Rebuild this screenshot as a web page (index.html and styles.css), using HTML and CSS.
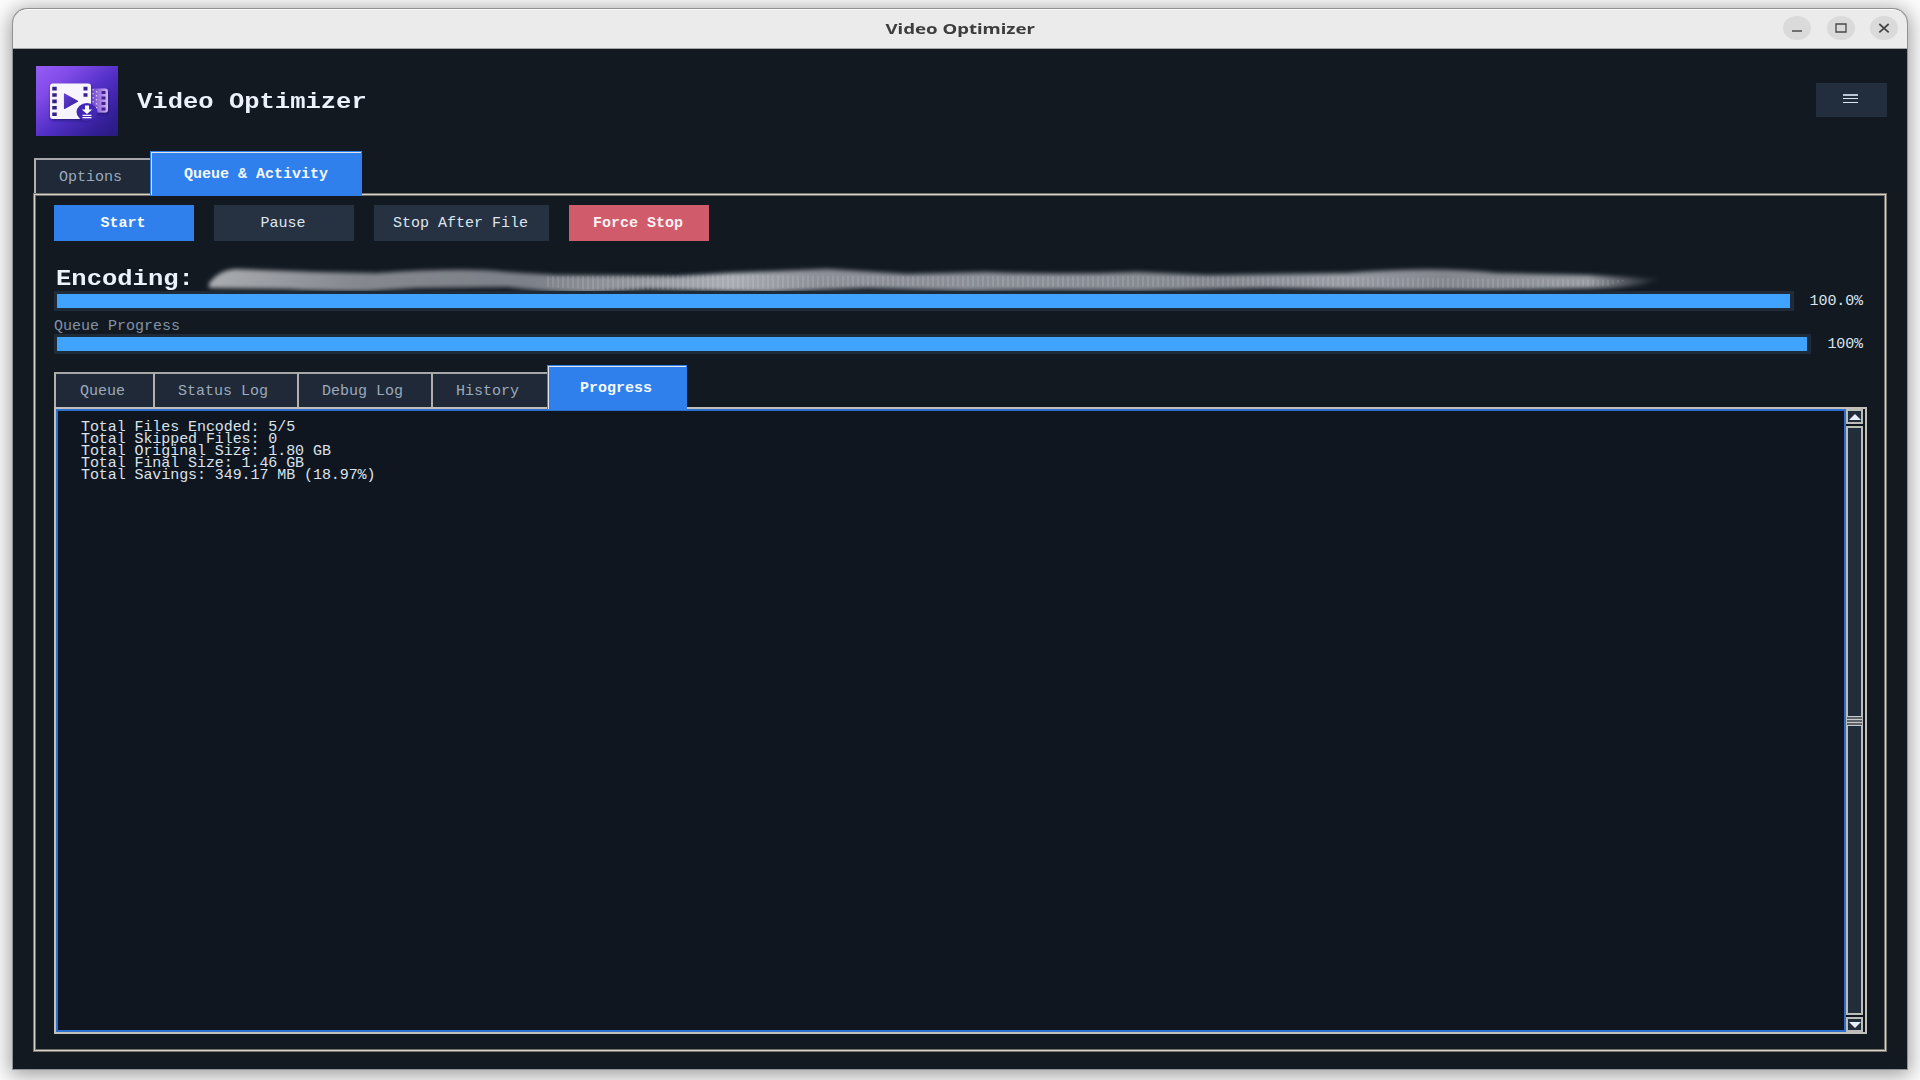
FILE: index.html
```
<!DOCTYPE html>
<html lang="en">
<head>
    <meta charset="UTF-8">
    <title>Video Optimizer</title>
    <link rel="stylesheet" href="styles.css">
</head>
<body>
    <div class="window">
        <div class="titlebar">
            <span class="window-title">Video Optimizer</span>
            <div class="window-buttons">
                <svg width="28" height="24" viewBox="0 0 28 24"><ellipse cx="14" cy="12" rx="14" ry="12" fill="#dadada"/><path d="M9 15h10" stroke="#555" stroke-width="1.6"/></svg>
                <svg width="28" height="24" viewBox="0 0 28 24"><ellipse cx="14" cy="12" rx="14" ry="12" fill="#dadada"/><path d="M9 8h10v8H9z" fill="none" stroke="#484848" stroke-width="1.3"/></svg>
                <svg width="28" height="24" viewBox="0 0 28 24"><ellipse cx="14" cy="12" rx="14" ry="12" fill="#dadada"/><path d="M9.300 8l9.400 8.400M18.700 8l-9.400 8.400" stroke="#444" stroke-width="1.7"/></svg>
            </div>
        </div>

        <div class="app">
            <header class="header">
                <svg class="logo" width="82" height="70" viewBox="0 0 82 70">
                    <defs>
                        <linearGradient id="bg" x1="0" y1="0" x2="1" y2="1">
                            <stop offset="0" stop-color="#975cf5"/>
                            <stop offset=".25" stop-color="#814be8"/>
                            <stop offset=".52" stop-color="#5330c8"/>
                            <stop offset=".8" stop-color="#35209a"/>
                            <stop offset="1" stop-color="#281a7c"/>
                        </linearGradient>
                        <linearGradient id="film" x1="0" y1="0" x2="1" y2="0">
                            <stop offset="0" stop-color="#5b35c4"/>
                            <stop offset=".4" stop-color="#7d55d6"/>
                            <stop offset="1" stop-color="#d5b4f6"/>
                        </linearGradient>
                        <linearGradient id="play" x1="0" y1="0" x2="1" y2="1">
                            <stop offset="0" stop-color="#6540d6"/>
                            <stop offset="1" stop-color="#321c94"/>
                        </linearGradient>
                        <filter id="drop" x="-20%" y="-20%" width="140%" height="150%">
                            <feDropShadow dx="0.500" dy="1.500" stdDeviation="1.200" flood-color="#1b0b60" flood-opacity=".7"/>
                        </filter>
                    </defs>
                    <rect width="82" height="70" fill="url(#bg)"/>
                    <g filter="url(#drop)">
                        <rect x="50" y="22.500" width="22" height="24" rx="3" fill="url(#film)"/>
                        <path d="M67.500 25v20" stroke="#40208f" stroke-width="4" stroke-dasharray="3 2.500"/>
                        <path d="M57 23v22M60.500 25v18" stroke="#dcc8fb" stroke-width="1.300" stroke-dasharray="1.500 2.500"/>
                    </g>
                    <g filter="url(#drop)">
                        <rect x="14" y="17.500" width="41" height="35.500" rx="3" fill="#f8f4fd"/>
                    </g>
                    <path d="M18.500 20.800v31" stroke="#34208b" stroke-width="4.500" stroke-dasharray="3.600 2.800"/>
                    <path d="M49.500 20.800v10" stroke="#34208b" stroke-width="4" stroke-dasharray="3.600 2.800"/>
                    <path d="M28.500 28v14.500l13-7.200z" fill="url(#play)" stroke="url(#play)" stroke-width="1.200" stroke-linejoin="round"/>
                    <ellipse cx="51" cy="46" rx="10.500" ry="9" fill="#4327b5"/>
                    <path d="M49 39.500h4v4h3.200L51 48l-5.200-4.500H49z" fill="#fff"/>
                    <path d="M46.500 49.300h9M46.500 51.700h9" stroke="#fff" stroke-width="1.200"/>
                </svg>
                <h1>Video Optimizer</h1>
                <button class="menu" aria-label="Menu">
                    <svg width="15" height="10" viewBox="0 0 15 10"><path d="M0 1h15" stroke="#b9c4d4" stroke-width="2"/><path d="M0 4.500h15M0 8.500h15" stroke="#dbe6f0"/></svg>
                </button>
            </header>

            <nav class="tabs">
                <div class="tab options">Options</div>
                <div class="tab active activity">Queue &amp; Activity</div>
            </nav>

            <main class="panel">
                <div class="controls">
                    <button class="btn primary">Start</button>
                    <button class="btn">Pause</button>
                    <button class="btn wide">Stop After File</button>
                    <button class="btn danger">Force Stop</button>
                </div>

                <div class="encoding">
                    <h2>Encoding:</h2>
                    <!-- smudged-out file name -->
                    <svg class="smudge" width="1460" height="32" viewBox="0 0 1460 32">
                        <defs>
                            <linearGradient id="ink" x1="0" y1="0" x2="1" y2="0">
                                <stop offset="0" stop-color="#aaacb1"/>
                                <stop offset=".1" stop-color="#85888f"/>
                                <stop offset=".22" stop-color="#7c8088"/>
                                <stop offset=".36" stop-color="#a9acb3"/>
                                <stop offset=".42" stop-color="#8c8f97"/>
                                <stop offset=".58" stop-color="#8a8e96"/>
                                <stop offset=".7" stop-color="#83878f"/>
                                <stop offset=".78" stop-color="#999ca4"/>
                                <stop offset=".85" stop-color="#84878f"/>
                                <stop offset=".95" stop-color="#989ba2"/>
                                <stop offset="1" stop-color="#989ba2" stop-opacity="0"/>
                            </linearGradient>
                            <pattern id="lines" width="5" height="32" patternUnits="userSpaceOnUse">
                                <path d="M1 0v32" stroke="#fff" stroke-opacity=".2"/>
                            </pattern>
                            <filter id="soft" x="-2%" y="-30%" width="104%" height="160%">
                                <feGaussianBlur stdDeviation="2.200"/>
                            </filter>
                        </defs>
                        <path fill="url(#ink)" filter="url(#soft)" d="M2 18Q12 5 28 4L110 7L170 8Q260 2 300 7L350 10L470 11L520 8L620 4L700 9L780 7Q850 10 930 7L1000 10L1140 8Q1230 1 1290 8L1380 10L1454 14Q1440 21 1400 23L1290 25L1190 25L1060 23L930 26L850 25L760 26L660 23L560 27L440 24L380 28Q340 27 300 22L210 23L160 26Q110 26 80 24L2 23Z"/>
                        <path fill="url(#lines)" d="M340 11L500 10L700 11L900 11L1140 12L1420 15L1400 21L1290 23L1060 21L850 22L660 21L540 24L400 25L340 22Z"/>
                    </svg>
                </div>
                <div class="progress-row">
                    <div class="bar"><div class="fill"></div></div>
                    <span>100.0%</span>
                </div>
                <div class="label">Queue Progress</div>
                <div class="progress-row">
                    <div class="bar"><div class="fill"></div></div>
                    <span>100%</span>
                </div>

                <nav class="tabs inner">
                    <div class="tab queue">Queue</div>
                    <div class="tab status">Status Log</div>
                    <div class="tab debug">Debug Log</div>
                    <div class="tab history">History</div>
                    <div class="tab active progress">Progress</div>
                </nav>

                <section class="log">
                    <pre class="log-text">Total Files Encoded: 5/5
Total Skipped Files: 0
Total Original Size: 1.80 GB
Total Final Size: 1.46 GB
Total Savings: 349.17 MB (18.97%)</pre>
                    <div class="scrollbar">
                        <div class="arrow"><svg width="12" height="6" viewBox="0 0 12 6"><path d="M0 6L6 0l6 6z" fill="#e9eefb"/></svg></div>
                        <div class="thumb"><div class="grip"></div></div>
                        <div class="arrow"><svg width="12" height="6" viewBox="0 0 12 6"><path d="M0 0h12L6 6z" fill="#e9eefb"/></svg></div>
                    </div>
                </section>
            </main>
        </div>
    </div>
</body>
</html>
```
FILE: styles.css
```
* {
    box-sizing: border-box;
}
body {
    margin: 0;
    padding: 9px 12px 11px 13px;
    width: 1920px;
    height: 1080px;
    overflow: hidden;
    background-color: #fcfcfc;
    font-family: "Liberation Mono", monospace;
    font-size: 15px;
}
h1, h2 {
    margin: 0;
    color: #edf1fb;
    font-size: 22px;
    line-height: 24px;
    transform: scaleX(1.16);
    transform-origin: left;
}
.window {
    display: flex;
    flex-direction: column;
    width: 1894px;
    height: 1060px;
    border-radius: 14px 14px 0 0;
    background-color: #121921;
    box-shadow: 0 0 0 1px #929292, 0 3px 20px 3px rgba(0, 0, 0, 0.38);
}
.titlebar {
    display: grid;
    grid-template-columns: 1fr auto 1fr;
    align-items: center;
    height: 40px;
    padding: 0 9px 2px 0;
    border-top: 1px solid #fafafa;
    border-bottom: 1px solid #a3a7a5;
    border-radius: 14px 14px 0 0;
    background-color: #ebebeb;
}
.window-title {
    grid-column: 2;
    padding-left: 8px;
    font: bold 15px "Noto Sans", sans-serif;
    color: #3d3d3d;
    transform: scaleX(1.24);
}
.window-buttons {
    display: flex;
    justify-content: flex-end;
    gap: 15.500px;
}
.app {
    flex: 1;
    display: flex;
    flex-direction: column;
    padding: 17px 20px 17px 20px;
}
.header {
    display: flex;
    align-items: center;
    height: 70px;
    padding-left: 3px;
}
.header h1 {
    margin: 4px 0 0 19px;
}
.menu {
    display: flex;
    justify-content: center;
    align-items: center;
    width: 71px;
    height: 34px;
    margin: 0 0 2px auto;
    padding: 0 3px 3px 0;
    border: 0;
    background-color: #222d3d;
}

/* tabs */
.tabs {
    display: flex;
    align-items: flex-end;
    height: 42px;
    margin-top: 15px;
    padding-left: 1px;
}
.tab {
    height: 35px;
    padding-right: 25px;
    border-top: 2px solid #a5a7a8;
    border-left: 2px solid #b0b0ad;
    background-color: #202938;
    color: #9ba9bb;
    line-height: 35px;
    text-align: right;
    white-space: nowrap;
}
.tab.active {
    position: relative;
    height: 45px;
    margin-bottom: -3px;
    border-color: #e0e4ea;
    outline: 1px solid #2f80ed;
    outline-offset: -1px;
    background-color: #2f80ed;
    color: #f4f8ff;
    font-weight: bold;
    line-height: 43px;
}
.options {
    width: 116px;
    padding-right: 28px;
}
.activity {
    width: 212px;
    padding-right: 34px;
}
.panel {
    flex: 1;
    display: flex;
    flex-direction: column;
    padding: 9px 19px 17px 18px;
    border: 1px solid #77756f;
    box-shadow: inset 0 0 0 1px #d9d0c4, inset 0 0 0 2px #716f6c;
}

/* buttons */
.controls {
    display: flex;
    gap: 20px;
    padding: 2px 0 0 2px;
}
.btn {
    width: 140px;
    height: 36px;
    padding: 1px 2px 0 0;
    border: 0;
    background-color: #263142;
    color: #dde5ef;
    font-family: inherit;
    font-size: 15px;
}
.btn.wide {
    width: 175px;
}
.primary {
    background-color: #2f80ed;
    color: #f4f8ff;
    font-weight: bold;
}
.danger {
    background-color: #d05b6b;
    color: #fff2f4;
    font-weight: bold;
}

/* encoding progress */
.encoding {
    display: flex;
    height: 50px;
    padding: 24px 0 0 4px;
}
.encoding h2 {
    width: 151px;
    padding-top: 3px;
}
.smudge {
    flex: none;
    overflow: visible;
}
.progress-row {
    display: flex;
    align-items: center;
    gap: 16px;
    height: 20px;
    padding: 0 4px 0 2px;
    color: #dbe3ec;
}
.progress-row span {
    letter-spacing: -0.100px;
}
.bar {
    flex: 1;
    height: 20px;
    padding: 3px 4px 3px 3px;
    background-color: #202b3a;
}
.fill {
    height: 14px;
    background-color: #3fa3ff;
}
.label {
    height: 23px;
    padding-left: 2px;
    color: #8391a6;
    line-height: 32px;
}

/* log panel */
.tabs.inner {
    height: 44px;
    margin-top: 9px;
    padding-left: 2px;
}
.inner .tab {
    line-height: 36px;
}
.inner .tab.active {
    line-height: 43px;
}
.queue {
    width: 99px;
    padding-right: 28px;
}
.status {
    width: 144px;
    padding-right: 29px;
}
.debug {
    width: 134px;
    padding-right: 28px;
}
.history {
    width: 116px;
    padding-right: 28px;
}
.progress {
    width: 140px;
    padding-right: 35px;
}
.log {
    flex: 1;
    display: flex;
    margin-left: 2px;
    border: 2px solid #c3c0b9;
    background-color: #101620;
}
.log-text {
    flex: 1;
    margin: 0;
    padding: 11px 0 0 23px;
    border: 2px solid #2d6fce;
    color: #dbe3ec;
    font-family: inherit;
    font-size: 15px;
    line-height: 12px;
    letter-spacing: -0.080px;
}
.scrollbar {
    display: flex;
    flex-direction: column;
    gap: 2px;
    width: 19px;
    padding: 0 2px 0 0;
    background-color: #101620;
}
.arrow, .thumb {
    display: flex;
    justify-content: center;
    align-items: center;
    border: 2px solid #bdbdb8;
    background-color: #222d3c;
}
.arrow {
    height: 15px;
}
.thumb {
    flex: 1;
}
.grip {
    width: 15px;
    height: 10px;
    margin: 0 -1px;
    flex: none;
    background: repeating-linear-gradient(#c9c9c6 0 1px, #5b626b 1px 3px);
}
```
